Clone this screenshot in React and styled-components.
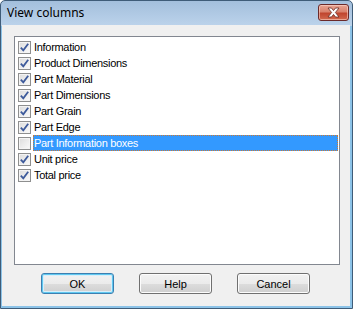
import React from "react";
import styled, { createGlobalStyle } from "styled-components";

const Global = createGlobalStyle`
  html, body { margin: 0; padding: 0; background: #ffffff; }
  body { font-family: "Liberation Sans", Arial, sans-serif; }
`;

const Window = styled.div`
  width: 353px;
  height: 309px;
  box-sizing: border-box;
  border: 1px solid #3f5c78;
  border-radius: 5px 5px 0 0;
  background: linear-gradient(#a3bfdc, #bcd3eb 25px, #8cc3e8 25px);
  display: flex;
  flex-direction: column;
  overflow: hidden;
`;

const TitleBar = styled.div`
  height: 24px;
  display: flex;
  align-items: center;
  justify-content: space-between;
  padding: 0 3px 0 6px;
  flex-shrink: 0;
`;

const Title = styled.span`
  font-family: "Noto Sans", "Open Sans", sans-serif;
  font-size: 12px;
  color: #000;
  margin-top: -2px;
`;

const CloseButton = styled.div`
  width: 31px;
  height: 17px;
  box-sizing: border-box;
  margin-top: -2px;
  border: 1px solid #6b2a2a;
  border-radius: 3px;
  background: linear-gradient(#e8a493 0%, #d9826d 45%, #c0452e 55%, #d26a4f 100%);
  box-shadow: inset 0 0 0 1px rgba(255, 220, 210, 0.55);
  display: flex;
  align-items: center;
  justify-content: center;
`;

const Client = styled.div`
  flex: 1;
  margin: 0 2px 2px 1px;
  background: #f0f0f0;
  display: flex;
  flex-direction: column;
  padding: 11px 10px 0 12px;
`;

const ListBox = styled.div`
  height: 229px;
  box-sizing: border-box;
  background: #fff;
  border: 1px solid #828790;
  padding: 2px 1px 0 2px;
  display: flex;
  flex-direction: column;
`;

const Row = styled.div`
  height: 16px;
  display: flex;
  align-items: center;
`;

const Box = styled.div`
  width: 13px;
  height: 13px;
  box-sizing: border-box;
  border: 1px solid #8e8f8f;
  background: linear-gradient(135deg, #dcdcdc, #fbfbfb);
  box-shadow: inset 0 0 0 1px #f4f4f4;
  margin: 1px 2px 0 1px;
  flex-shrink: 0;
  display: flex;
  align-items: center;
  justify-content: center;
`;

const Label = styled.div`
  flex: 1;
  height: 16px;
  box-sizing: border-box;
  padding-left: 0;
  font-size: 11px;
  line-height: 14px;
  color: ${(p) => (p.$selected ? "#fff" : "#000")};
  background: ${(p) => (p.$selected ? "#3399ff" : "transparent")};
  border: 1px dotted ${(p) => (p.$selected ? "#cc7a33" : "transparent")};
  letter-spacing: -0.3px;
  white-space: nowrap;
`;

const ButtonRow = styled.div`
  display: flex;
  gap: 25px;
  padding: 8px 0 0 27px;
`;

const Button = styled.div`
  width: 73px;
  height: 21px;
  box-sizing: border-box;
  border: 1px solid ${(p) => (p.$default ? "#3c7fb1" : "#707070")};
  border-radius: 3px;
  background: linear-gradient(#f2f2f2 0%, #ebebeb 50%, #dddddd 50%, #cfcfcf 100%);
  box-shadow: ${(p) =>
    p.$default ? "inset 0 0 0 1px #5fc8f0, inset 0 0 0 2px #d8eefa" : "inset 0 0 0 1px #fcfcfc"};
  display: flex;
  align-items: center;
  justify-content: center;
  font-size: 11px;
  color: #000;
`;

const Check = () => (
  <svg width="9" height="9" viewBox="0 0 9 9">
    <path d="M0.8 4.6 L3.3 7.4 L8.2 0.8" fill="none" stroke="#3d5a9b" strokeWidth="1.8" />
  </svg>
);

const CloseX = () => (
  <svg width="13" height="11" viewBox="0 0 13 11">
    <path
      d="M1 1 H4.5 L6.5 3.6 L8.5 1 H12 L8.4 5.5 L12 10 H8.5 L6.5 7.4 L4.5 10 H1 L4.6 5.5 Z"
      fill="#ffffff"
      stroke="#6a2b24"
      strokeWidth="0.8"
    />
  </svg>
);

const items = [
  { label: "Information", checked: true },
  { label: "Product Dimensions", checked: true },
  { label: "Part Material", checked: true },
  { label: "Part Dimensions", checked: true },
  { label: "Part Grain", checked: true },
  { label: "Part Edge", checked: true },
  { label: "Part Information boxes", checked: false, selected: true },
  { label: "Unit price", checked: true },
  { label: "Total price", checked: true },
];

export default function App() {
  return (
    <>
      <Global />
      <Window>
        <TitleBar>
          <Title>View columns</Title>
          <CloseButton>
            <CloseX />
          </CloseButton>
        </TitleBar>
        <Client>
          <ListBox>
            {items.map((it) => (
              <Row key={it.label}>
                <Box>{it.checked && <Check />}</Box>
                <Label $selected={it.selected}>{it.label}</Label>
              </Row>
            ))}
          </ListBox>
          <ButtonRow>
            <Button $default>OK</Button>
            <Button>Help</Button>
            <Button>Cancel</Button>
          </ButtonRow>
        </Client>
      </Window>
    </>
  );
}
